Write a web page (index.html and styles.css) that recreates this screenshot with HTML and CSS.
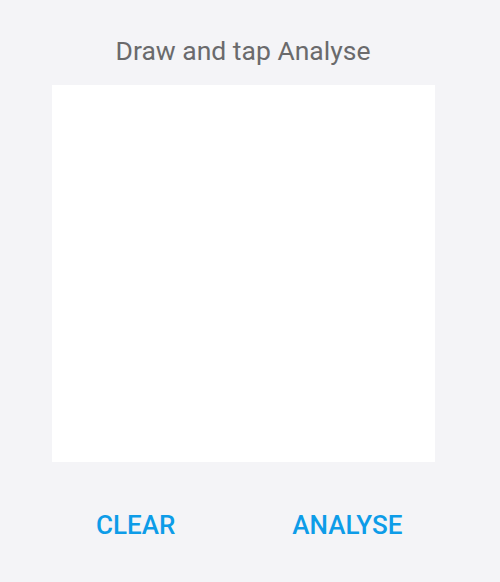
FILE: index.html
```html
<!DOCTYPE html>
<html>
<head>
<meta charset="utf-8">
<link rel="stylesheet" href="styles.css">
</head>
<body>
<div class="screen">
  <h1 class="title">Draw and tap Analyse</h1>
  <div class="canvas"></div>
  <div class="actions">
    <button class="btn">CLEAR</button>
    <button class="btn">ANALYSE</button>
  </div>
</div>
</body>
</html>
```
FILE: styles.css
```css
html, body {
  margin: 0;
  padding: 0;
  background: #f4f4f7;
}
.screen {
  width: 500px;
  height: 582px;
  display: flex;
  flex-direction: column;
  align-items: flex-start;
  font-family: Roboto, "Noto Sans", sans-serif;
}
.title {
  margin: 36px 0 0 0;
  width: 486px;
  text-align: center;
  font-size: 26.5px;
  font-weight: 400;
  line-height: 30px;
  color: #6a6a6c;
}
.canvas {
  margin: 19px 0 0 52px;
  width: 383px;
  height: 377px;
  background: #ffffff;
}
.actions {
  margin-top: 48px;
  width: 100%;
  display: flex;
}
.btn {
  border: 0;
  background: none;
  padding: 0;
  font-family: Roboto, "Noto Sans", sans-serif;
  font-size: 26px;
  font-weight: 500;
  line-height: 30px;
  color: #0d9ce8;
}
.btn:first-child {
  margin-left: 96px;
}
.btn:last-child {
  margin-left: 117px;
}
```
